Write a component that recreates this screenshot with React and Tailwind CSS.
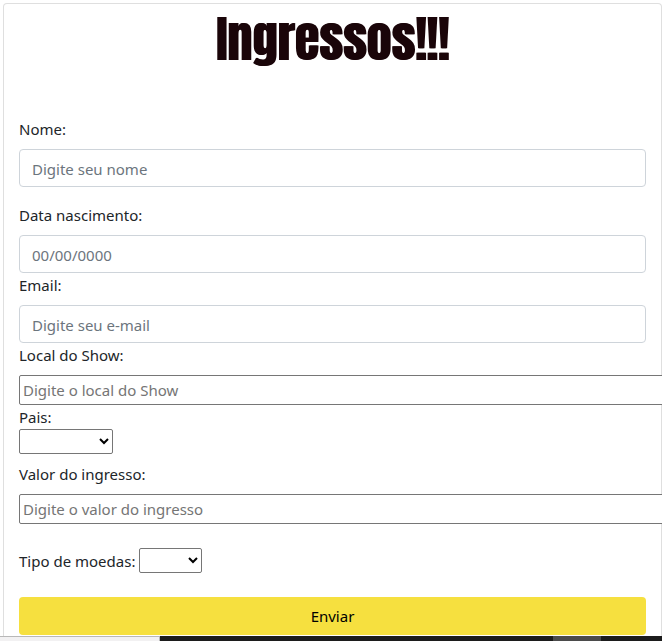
const labelClass = 'mb-2 block leading-6';
const inputClass =
  'block h-[38px] w-full rounded border border-[#ced4da] bg-white px-3 pt-1 pb-0.5 placeholder:text-[#6c757d]';
const plainInputClass =
  'block h-[30px] w-[800px] rounded-[2px] border border-[#767676] bg-white px-[3px] placeholder:text-[#757575]';
const selectClass = 'h-[25px] rounded-[2px] border border-[#767676] bg-white text-black';

export default function App() {
  return (
    <div className="overflow-hidden bg-white pt-[3px] font-['Segoe_UI','Noto_Sans',sans-serif] text-[15px] text-[#212529]">
      <main className="ml-[3px] rounded-t border border-b-0 border-[#dfdfdf] px-[15px] pb-px">
        <h1 className="h-[113px] text-center font-['Anton','Liberation_Sans_Narrow',sans-serif] text-[50px] leading-[70px] font-medium text-[#1a0509] [text-shadow:1px_0_0_#1a0509]">
          Ingressos!!!
        </h1>
        <form>
          <div className="mb-4">
            <label htmlFor="nome" className={labelClass}>Nome:</label>
            <input id="nome" type="text" placeholder="Digite seu nome" className={inputClass} />
          </div>
          <div>
            <label htmlFor="nascimento" className={labelClass}>Data nascimento:</label>
            <input id="nascimento" type="text" placeholder="00/00/0000" className={inputClass} />
          </div>
          <div>
            <label htmlFor="email" className={labelClass}>Email:</label>
            <input id="email" type="email" placeholder="Digite seu e-mail" className={inputClass} />
          </div>
          <div>
            <label htmlFor="local" className={labelClass}>Local do Show:</label>
            <input id="local" type="text" placeholder="Digite o local do Show" className={plainInputClass} />
          </div>
          <div className="mb-2">
            <label htmlFor="pais" className="block leading-6">Pais:</label>
            <select id="pais" className={`${selectClass} block w-[94px]`}>
              <option></option>
            </select>
          </div>
          <div className="mb-6">
            <label htmlFor="valor" className={labelClass}>Valor do ingresso:</label>
            <input id="valor" type="text" placeholder="Digite o valor do ingresso" className={plainInputClass} />
          </div>
          <div className="mb-6 flex items-center gap-1">
            <label htmlFor="moeda" className="leading-6">Tipo de moedas:</label>
            <select id="moeda" className={`${selectClass} w-[63px]`}>
              <option></option>
            </select>
          </div>
          <button type="submit" className="block h-[38px] w-full rounded bg-[#f6e03f] text-black">
            Enviar
          </button>
        </form>
      </main>
      <footer className="flex h-[5px] bg-[#1c1c1c]">
        <div className="w-40 border-t border-r border-[#b8b8b8] bg-[#f2f1f2]" />
        <div className="ml-auto mr-[61px] w-12 bg-[#4b4b4b]" />
      </footer>
    </div>
  );
}
